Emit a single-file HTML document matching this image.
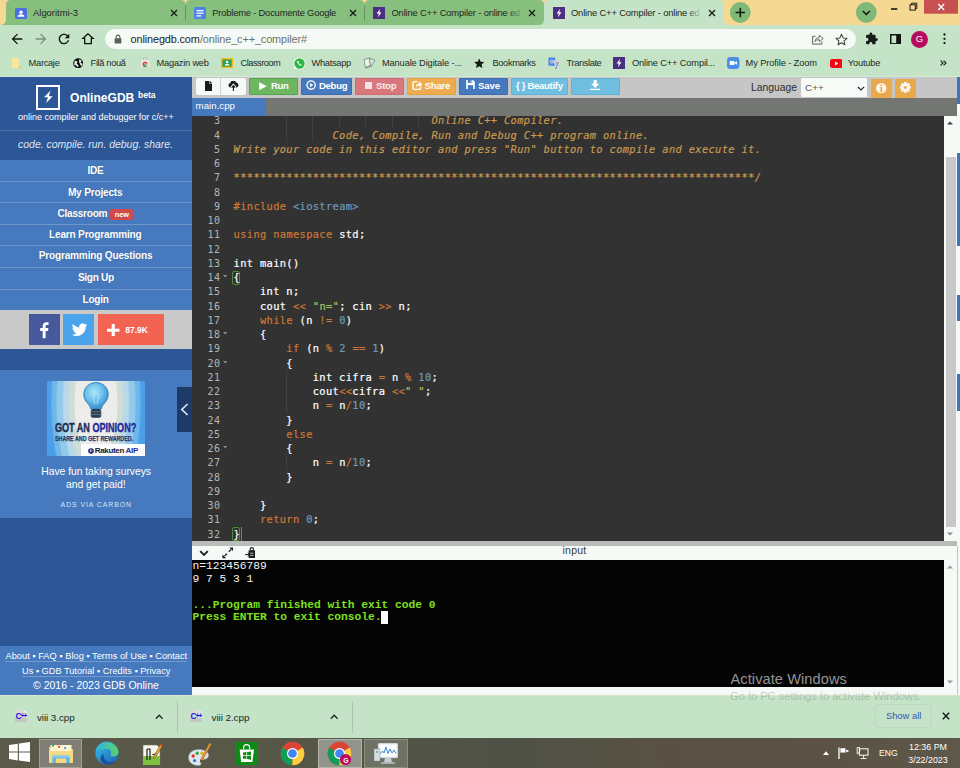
<!DOCTYPE html>
<html lang="en"><head><meta charset="utf-8"><title>Online C++ Compiler - online editor</title>
<style>
*{margin:0;padding:0;box-sizing:content-box}
html,body{width:960px;height:768px;overflow:hidden;background:#C4E3C7}
body{font-family:"Liberation Sans",sans-serif;position:relative;-webkit-font-smoothing:antialiased}
.b{position:absolute;display:block}
.t{position:absolute;display:block;line-height:1;white-space:pre}
ul{list-style:none}
.clip{overflow:hidden;white-space:nowrap}
.gutter{font-family:"DejaVu Sans Mono","Liberation Mono",monospace;font-size:10px;letter-spacing:0.58px;color:#b6b6b6;text-align:right}
.ln{height:14.25px;line-height:14.25px}
.code{font-family:"DejaVu Sans Mono","Liberation Mono",monospace;font-size:10.4px;letter-spacing:0.34px;color:#fff;white-space:pre;margin:0;-webkit-text-stroke:.2px}
.cl{height:14.25px;line-height:14.25px}
.k{color:#CC7833}.n{color:#6C99BB}.s{color:#A5C261}.c{color:#C6994F;font-style:italic}
.tl{white-space:pre}
</style></head>
<body>
<header class="b chrome" style='left:0px;top:0px;width:960px;height:77px;background:#C4E3C7;'>
<nav class="b tabstrip" style='left:0px;top:0px;width:960px;height:25px;background:#F5D891;'>
<svg class="b" style="left:0px;top:0px;" width="960" height="25" viewBox="0 0 960 25"><rect x="538" y="18" width="8" height="7" fill="#C4E3C7"/><rect x="180" y="5" width="190" height="20" fill="#86BF7E"/><path d="M0 25 Q6 25 6 19 V5 Q6 0 11 0 H180.500 Q185.500 0 185.500 5 V25z" fill="#86BF7E"/><path d="M185.500 25 V5 Q185.500 0 190.500 0 H359.500 Q364.500 0 364.500 5 V25z" fill="#86BF7E"/><path d="M364.500 25 V5 Q364.500 0 369.500 0 H539 Q544 0 544 5 V19 Q544 25 538 25z" fill="#86BF7E"/><path d="M544 25 V5 Q544 0 549 0 H719 Q724 0 724 5 V25z" fill="#C4E3C7"/><rect x="723.500" y="19" width="7" height="6" fill="#C4E3C7"/><path d="M724 19 H731 V25 H729.500 Q724 25 724 19z" fill="#F5D891"/><rect x="185" y="5" width="1" height="15.500" fill="#5f9a58"/><rect x="364" y="5" width="1" height="15.500" fill="#5f9a58"/><circle cx="740.300" cy="12.500" r="10.400" fill="#7FB978"/><path d="M735.600 12.500h9.400M740.300 7.800v9.400" stroke="#10160f" stroke-width="1.500"/><circle cx="866.300" cy="12.500" r="10.400" fill="#7FB978"/><path d="M862.800 11 l3.500 3.500 3.500-3.500" stroke="#10160f" stroke-width="1.400" fill="none"/><rect x="891" y="8.200" width="6.300" height="1.600" fill="#1b1b12"/><path d="M911.500 4.800v-1.600h5.300v5.300h-1.600" stroke="#1b1b12" stroke-width="1" fill="none"/><rect x="910" y="4.800" width="5.300" height="5.300" stroke="#1b1b12" stroke-width="1" fill="none"/><rect x="924" y="0" width="34" height="13.700" fill="#C75050"/><path d="M938.200 4 l6 6 M944.200 4 l-6 6" stroke="#fff" stroke-width="1.300"/></svg>
<svg class="b" style="left:15px;top:7.5px;" width="12" height="11" viewBox="0 0 12 11"><rect width="12" height="11" rx="1.500" fill="#4A6FE3"/><circle cx="6" cy="4.200" r="1.700" fill="#fff"/><path d="M2.600 8.800q0-2.600 3.400-2.600t3.400 2.600z" fill="#fff"/></svg>
<span class="t" style='left:33px;top:8.2px;font-size:9.4px;color:#1e2620;letter-spacing:0.02px;'>Algoritmi-3</span>
<svg class="b" style="left:170.3px;top:8.7px;" width="8" height="8" viewBox="0 0 8 8"><path d="M1 1 L7 7 M7 1 L1 7" stroke="#161a16" stroke-width="1.3" fill="none"/></svg>
<svg class="b" style="left:194px;top:6.8px;" width="12" height="12.4" viewBox="0 0 12 12.4"><rect width="12" height="12.400" rx="1.500" fill="#4C84E8"/><path d="M2.500 3.600h7M2.500 6.200h7M2.500 8.800h4.600" stroke="#fff" stroke-width="1.300"/></svg>
<span class="t" style='left:212.3px;top:8.2px;font-size:9.4px;color:#1e2620;letter-spacing:-0.2px;'>Probleme - Documente Google</span>
<svg class="b" style="left:349.2px;top:8.7px;" width="8" height="8" viewBox="0 0 8 8"><path d="M1 1 L7 7 M7 1 L1 7" stroke="#161a16" stroke-width="1.3" fill="none"/></svg>
<svg class="b" style="left:373.3px;top:6.8px;" width="12" height="12" viewBox="0 0 12 12"><rect width="12" height="12" fill="#4B2E83"/><path d="M7.1 1.8 3.6 6.6h2.2L4.9 10.2 8.5 5.3H6.2z" fill="#fff"/></svg>
<div class="b" style='left:391.5px;top:3px;width:131px;height:19px;overflow:hidden;'><span class="t" style='left:0px;top:5.2px;font-size:9.4px;color:#1e2620;letter-spacing:-0.17px;'>Online C++ Compiler - online ed</span></div>
<div class="b" style='left:508px;top:4px;width:15px;height:17px;background:linear-gradient(90deg,rgba(134,191,126,0),#86BF7E);'></div>
<svg class="b" style="left:528.2px;top:8.7px;" width="8" height="8" viewBox="0 0 8 8"><path d="M1 1 L7 7 M7 1 L1 7" stroke="#161a16" stroke-width="1.3" fill="none"/></svg>
<svg class="b" style="left:553px;top:6.8px;" width="12" height="12" viewBox="0 0 12 12"><rect width="12" height="12" fill="#4B2E83"/><path d="M7.1 1.8 3.6 6.6h2.2L4.9 10.2 8.5 5.3H6.2z" fill="#fff"/></svg>
<div class="b" style='left:571px;top:3px;width:131px;height:19px;overflow:hidden;'><span class="t" style='left:0px;top:5.2px;font-size:9.4px;color:#1e2620;letter-spacing:-0.17px;'>Online C++ Compiler - online ed</span></div>
<div class="b" style='left:687px;top:4px;width:15px;height:17px;background:linear-gradient(90deg,rgba(196,227,199,0),#C4E3C7);'></div>
<svg class="b" style="left:707.6px;top:8.7px;" width="8" height="8" viewBox="0 0 8 8"><path d="M1 1 L7 7 M7 1 L1 7" stroke="#161a16" stroke-width="1.3" fill="none"/></svg>
</nav>
<div class="b toolbar" style='left:0px;top:25px;width:960px;height:27px;'>
<svg class="b" style="left:8.5px;top:6px;" width="16" height="16" viewBox="0 0 24 24"><path d="M20 11H7.830l5.590-5.590L12 4l-8 8 8 8 1.410-1.410L7.830 13H20v-2z" fill="#121712"/></svg>
<svg class="b" style="left:32.5px;top:6px;" width="16" height="16" viewBox="0 0 24 24"><path d="M4 11h12.170l-5.590-5.590L12 4l8 8-8 8-1.410-1.410L16.170 13H4v-2z" fill="#7f8f80"/></svg>
<svg class="b" style="left:56.3px;top:6px;" width="16" height="16" viewBox="0 0 24 24"><path d="M17.650 6.350C16.200 4.900 14.210 4 12 4c-4.420 0-7.990 3.580-7.990 8s3.570 8 7.990 8c3.730 0 6.840-2.550 7.730-6h-2.080c-.820 2.330-3.040 4-5.650 4-3.310 0-6-2.690-6-6s2.690-6 6-6c1.660 0 3.140.690 4.220 1.780L13 11h7V4l-2.350 2.350z" fill="#121712"/></svg>
<svg class="b" style="left:80.4px;top:6px;" width="16" height="16" viewBox="0 0 24 24"><path d="M12 4.200 4.500 11H7v8h10v-8h2.500z" fill="none" stroke="#121712" stroke-width="2" stroke-linejoin="miter"/></svg>
<div class="b omnibox" style='left:105px;top:3.5px;width:750.5px;height:20.8px;background:#F6FAF6;border-radius:10.400px;'></div>
<svg class="b" style="left:114px;top:8.5px;" width="8" height="10" viewBox="0 0 8 10"><rect x="0.600" y="4.200" width="6.800" height="5.400" rx="0.800" fill="#5a5f5a"/><path d="M2.100 4.500V3a1.900 1.900 0 0 1 3.800 0v1.500" fill="none" stroke="#5a5f5a" stroke-width="1.100"/></svg>
<span class="t" style='left:130.6px;top:8.7px;font-size:10.9px;color:#1c211d;letter-spacing:-0.13px;'>onlinegdb.com</span>
<span class="t" style='left:199.9px;top:8.7px;font-size:10.9px;color:#6a716b;letter-spacing:-0.12px;'>/online_c++_compiler#</span>
<svg class="b" style="left:811px;top:8px;" width="13" height="12" viewBox="0 0 13 12"><path d="M4.500 3.300H1.600v7.800h9.300V8.600" fill="none" stroke="#5b615b" stroke-width="1"/><path d="M3.800 8.600Q4.300 4.600 8.300 4.500V2.300L12.300 5.500 8.300 8.700V6.600Q5.300 6.500 3.800 8.600z" fill="none" stroke="#5b615b" stroke-width="0.900" stroke-linejoin="round"/></svg>
<svg class="b" style="left:834.5px;top:7.5px;" width="13" height="13" viewBox="0 0 13 13"><path d="M6.500 1.300 8.100 4.900 12 5.300 9.100 7.900 9.900 11.800 6.500 9.800 3.100 11.800 3.900 7.900 1 5.300 4.900 4.900z" fill="none" stroke="#3d433e" stroke-width="1.050" stroke-linejoin="round"/></svg>
<svg class="b" style="left:864.5px;top:7.3px;" width="13.4" height="13.4" viewBox="0 0 24 24"><path d="M20.500 11H19V7c0-1.100-.900-2-2-2h-4V3.500C13 2.120 11.880 1 10.500 1S8 2.120 8 3.500V5H4c-1.100 0-1.990.900-1.990 2v3.800H3.500c1.490 0 2.700 1.210 2.700 2.700s-1.210 2.700-2.700 2.700H2V20c0 1.100.900 2 2 2h3.800v-1.500c0-1.490 1.210-2.700 2.700-2.700 1.490 0 2.700 1.210 2.700 2.700V22H17c1.100 0 2-.900 2-2v-4h1.500c1.380 0 2.500-1.120 2.500-2.500S21.880 11 20.500 11z" fill="#161c17"/></svg>
<svg class="b" style="left:889.8px;top:8.5px;" width="11.5" height="10.6" viewBox="0 0 11.5 10.6"><rect x="0.750" y="0.750" width="10" height="9.100" fill="none" stroke="#101410" stroke-width="1.500"/><rect x="6.200" y="0.750" width="4.600" height="9.100" fill="#101410"/></svg>
<div class="b avatar" style='left:911px;top:5.6px;width:17px;height:17px;background:#B80A5F;border-radius:50%;'></div>
<span class="t" style='left:919.6px;transform:translateX(-50%);top:9.4px;font-size:9.6px;color:#fff;'>G</span>
<svg class="b" style="left:942.5px;top:8.4px;" width="3" height="12" viewBox="0 0 3 12"><circle cx="1.500" cy="1.500" r="1.150" fill="#141814"/><circle cx="1.500" cy="5.800" r="1.150" fill="#141814"/><circle cx="1.500" cy="10.100" r="1.150" fill="#141814"/></svg>
</div>
<div class="b bookmarks" style='left:0px;top:52px;width:960px;height:25px;'>
<div class="b" style='left:0px;top:24px;width:960px;height:1px;background:#d3e9d5;'></div>
<svg class="b" style="left:12px;top:5.8px;" width="8.6" height="10.4" viewBox="0 0 8.6 10.4"><path d="M0 0h6.800v8.600H8.600v1.800H0z" fill="#FBE69A"/><path d="M6.800 8.600h1.800v1.800H6.800z" fill="#E9B93C"/></svg>
<span class="t" style='left:28.6px;top:6.9px;font-size:9.3px;color:#242b25;letter-spacing:-0.31px;'>Marcaje</span>
<svg class="b" style="left:73px;top:5.6px;" width="10.4" height="10.4" viewBox="0 0 10.4 10.4"><circle cx="5.200" cy="5.200" r="5" fill="#111"/><path d="M2 2.600 4.600 3.800 3.600 5.800 5.600 7.200 4.800 9.600 3.200 7.600 1 6.400zM6.400 1.200 8.800 2.800 7.400 4.400 9.800 6 8.400 8.200 7 6.200 6 3.400z" fill="#dfeee0"/></svg>
<span class="t" style='left:90.6px;top:6.9px;font-size:9.3px;color:#242b25;letter-spacing:-0.36px;'>Filă nouă</span>
<svg class="b" style="left:139.5px;top:5.4px;" width="10.4" height="11" viewBox="0 0 10.4 11"><path d="M1 2.800h8.400L10 10.400H.400z" fill="#f1f1f1" stroke="#c9c9c9" stroke-width=".5"/><path d="M3.300 3V1.900a1.900 1.900 0 0 1 3.800 0V3" fill="none" stroke="#bbb" stroke-width=".8"/><circle cx="5.200" cy="7.300" r="2.700" fill="#DB4437"/><path d="M5.200 7.300 2.900 8.700A2.700 2.700 0 0 0 6.600 9.600z" fill="#0F9D58"/><path d="M5.200 7.300 6.600 9.600A2.700 2.700 0 0 0 7.700 6.200z" fill="#FFCD40"/><circle cx="5.200" cy="7.300" r="1.100" fill="#4285F4" stroke="#fff" stroke-width=".4"/></svg>
<span class="t" style='left:156.5px;top:6.9px;font-size:9.3px;color:#242b25;letter-spacing:-0.23px;'>Magazin web</span>
<svg class="b" style="left:221px;top:6px;" width="12.2" height="10.2" viewBox="0 0 12.2 10.2"><rect width="12.200" height="10.200" rx="1" fill="#F5BA18"/><rect x="1.500" y="1.500" width="9.200" height="7.200" fill="#2E9E5B"/><circle cx="6.100" cy="4" r="1.300" fill="#fff"/><path d="M3.600 7.600q0-1.900 2.500-1.900t2.500 1.900z" fill="#fff"/></svg>
<span class="t" style='left:240.6px;top:6.9px;font-size:9.3px;color:#242b25;letter-spacing:-0.54px;'>Classroom</span>
<svg class="b" style="left:292.6px;top:4.6px;" width="13" height="13" viewBox="0 0 12 12"><circle cx="6" cy="6" r="5.600" fill="#fff"/><circle cx="6" cy="6" r="4.800" fill="#2CB742"/><path d="M.700 11.400 1.700 8.300 3.700 10.300z" fill="#fff"/><path d="M4.300 3.500c-.6.500-.6 1.500.4 2.800s2.100 2 3 1.800l.5-.8-1.100-.7-.5.400c-.5-.2-1.100-.8-1.400-1.400l.4-.5-.6-1.300z" fill="#fff"/></svg>
<span class="t" style='left:311.5px;top:6.9px;font-size:9.3px;color:#242b25;letter-spacing:-0.31px;'>Whatsapp</span>
<svg class="b" style="left:363px;top:5.4px;" width="13.4" height="11.4" viewBox="0 0 13.4 11.4"><path d="M1 2.600 6.400 1 7.600 8.400 2.400 10.600z" fill="#e9f3ea" stroke="#5e665f" stroke-width=".6"/><path d="M6.400 1 12 3.400 8.200 9.300 7.600 8.400z" fill="#dbe8dc" stroke="#5e665f" stroke-width=".6"/><path d="M2.400 10.600 7.600 8.400 8.200 9.300 3 11.200z" fill="#cfd9d0" stroke="#5e665f" stroke-width=".5"/></svg>
<span class="t" style='left:381.9px;top:6.9px;font-size:9.3px;color:#242b25;letter-spacing:-0.13px;'>Manuale Digitale -...</span>
<svg class="b" style="left:474.4px;top:5.6px;" width="10.4" height="10.4" viewBox="0 0 10.4 10.4"><path d="M5.200 .400 6.700 3.800 10.300 4.100 7.600 6.500 8.400 10.100 5.200 8.200 2 10.100 2.800 6.500 .100 4.100 3.700 3.800z" fill="#141a15"/></svg>
<span class="t" style='left:492.5px;top:6.9px;font-size:9.3px;color:#242b25;letter-spacing:-0.38px;'>Bookmarks</span>
<svg class="b" style="left:548px;top:5px;" width="12.4" height="12.4" viewBox="0 0 12.4 12.4"><path d="M.500 .400H7l1.500 8.400H.500z" fill="#4C86E8"/><path d="M5 3.600h6.900v7.600l-3.400.800z" fill="#d5dbe0"/><path d="M8.500 8.800 6.900 12.200 8.900 11z" fill="#3B68C9"/><circle cx="3.800" cy="4.600" r="1.400" fill="none" stroke="#fff" stroke-width=".8"/><path d="M7.600 5.600h3.400M9.300 5v.6M8 8.600q2-1.200 2.400-3M8.300 6.400q.8 1.600 2.400 2.200" stroke="#6b7680" stroke-width=".6" fill="none"/></svg>
<span class="t" style='left:566.5px;top:6.9px;font-size:9.3px;color:#242b25;letter-spacing:-0.39px;'>Translate</span>
<svg class="b" style="left:613.3px;top:5px;" width="12" height="12" viewBox="0 0 12 12"><rect width="12" height="12" fill="#4B2E83"/><path d="M7.1 1.8 3.6 6.6h2.2L4.9 10.2 8.5 5.3H6.2z" fill="#fff"/></svg>
<span class="t" style='left:631.9px;top:6.9px;font-size:9.3px;color:#242b25;letter-spacing:-0.16px;'>Online C++ Compil...</span>
<svg class="b" style="left:727.3px;top:5px;" width="12.4" height="12" viewBox="0 0 12.4 12"><rect width="12.400" height="12" rx="3.400" fill="#4A8CF0"/><rect x="2.600" y="4" width="5" height="4" rx=".8" fill="#fff"/><path d="M7.900 5.600 10 4.200v3.600L7.900 6.400z" fill="#fff"/><path d="M2.600 2.200h7.200" stroke="#4fc06a" stroke-width=".8" stroke-dasharray="1 1"/></svg>
<span class="t" style='left:745.6px;top:6.9px;font-size:9.3px;color:#242b25;letter-spacing:-0.12px;'>My Profile - Zoom</span>
<svg class="b" style="left:829.5px;top:6.6px;" width="12.6" height="9" viewBox="0 0 12.6 9"><rect width="12.600" height="9" rx="2.300" fill="#F40612"/><path d="M5 2.500 8.300 4.500 5 6.500z" fill="#fff"/></svg>
<span class="t" style='left:847.8px;top:6.9px;font-size:9.3px;color:#242b25;letter-spacing:-0.19px;'>Youtube</span>
<svg class="b" style="left:939.5px;top:8px;" width="7" height="6" viewBox="0 0 7 6"><path d="M.600 .600 3 3 .600 5.400M3.600 .600 6 3 3.600 5.400" stroke="#1a201b" stroke-width="1.100" fill="none"/></svg>
</div>
</header>
<div class="b page" style='left:0px;top:77px;width:960px;height:618px;background:#F6FAF6;'>
<aside class="b sidebar" style='left:0px;top:0px;width:192px;height:618px;background:#2C5696;'>
<div class="b logo" style='left:35.9px;top:8px;width:24.2px;height:24.9px;border:solid #fff;border-width:2.900px 2.300px;box-sizing:border-box;'></div>
<svg class="b" style="left:43px;top:13px;" width="11" height="14" viewBox="0 0 11 14"><path d="M7.400 .800 1 7.300H4.900L3.200 13 9.700 6.200H5.900z" fill="#fff"/></svg>
<span class="t" style='left:70px;top:15.1px;font-size:12.07px;color:#fff;font-weight:bold;'>OnlineGDB</span>
<span class="t" style='left:138px;top:13.5px;font-size:8.55px;color:#fff;font-weight:bold;'>beta</span>
<span class="t" style='left:18px;top:36.2px;font-size:8.99px;color:#fff;'>online compiler and debugger for c/c++</span>
<div class="b" style='left:0px;top:52.7px;width:192px;height:0.9px;background:#4a6fa6;'></div>
<span class="t" style='left:18.1px;top:63.2px;font-size:10.45px;color:#dfe6f2;font-style:italic;'>code. compile. run. debug. share.</span>
<nav class="b menu" style='left:0px;top:83.4px;width:192px;height:149.4px;background:#4679BD;'>
<div class="b" style='left:0px;top:20.7px;width:192px;height:0.9px;background:#6E94C9;'></div>
<div class="b" style='left:0px;top:42px;width:192px;height:0.9px;background:#6E94C9;'></div>
<div class="b" style='left:0px;top:63.6px;width:192px;height:0.9px;background:#6E94C9;'></div>
<div class="b" style='left:0px;top:84.5px;width:192px;height:0.9px;background:#6E94C9;'></div>
<div class="b" style='left:0px;top:106.35px;width:192px;height:0.9px;background:#6E94C9;'></div>
<div class="b" style='left:0px;top:128.6px;width:192px;height:0.9px;background:#6E94C9;'></div>
<span class="t" style='left:87.5px;top:5.5px;font-size:10.1px;color:#fff;font-weight:bold;letter-spacing:-0.28px;text-shadow:0 0 1px rgba(0,0,0,.25);'>IDE</span>
<span class="t" style='left:67.9px;top:27.35px;font-size:10.1px;color:#fff;font-weight:bold;letter-spacing:-0.19px;text-shadow:0 0 1px rgba(0,0,0,.25);'>My Projects</span>
<span class="t" style='left:57.5px;top:48.2px;font-size:10.1px;color:#fff;font-weight:bold;letter-spacing:-0.27px;text-shadow:0 0 1px rgba(0,0,0,.25);'>Classroom</span>
<span class="t" style='left:49.1px;top:70.1px;font-size:10.1px;color:#fff;font-weight:bold;letter-spacing:-0.21px;text-shadow:0 0 1px rgba(0,0,0,.25);'>Learn Programming</span>
<span class="t" style='left:38.75px;top:90.7px;font-size:10.1px;color:#fff;font-weight:bold;letter-spacing:-0.2px;text-shadow:0 0 1px rgba(0,0,0,.25);'>Programming Questions</span>
<span class="t" style='left:77.9px;top:112.6px;font-size:10.1px;color:#fff;font-weight:bold;letter-spacing:-0.32px;text-shadow:0 0 1px rgba(0,0,0,.25);'>Sign Up</span>
<span class="t" style='left:82.5px;top:134.5px;font-size:10.1px;color:#fff;font-weight:bold;letter-spacing:-0.29px;text-shadow:0 0 1px rgba(0,0,0,.25);'>Login</span>
<div class="b badge" style='left:110.2px;top:48.2px;width:23.3px;height:11.8px;background:#D04A4C;border-radius:2px;'></div>
<span class="t" style='left:121.9px;transform:translateX(-50%);top:50.8px;font-size:7.4px;color:#fff;font-weight:bold;'>new</span>
</nav>
<div class="b social" style='left:0px;top:232.8px;width:192px;height:39.6px;background:#C9C9C9;'>
<div class="b" style='left:28.7px;top:4.4px;width:31.4px;height:31.3px;background:#47599D;'></div>
<svg class="b" style="left:38px;top:11.2px;" width="12" height="18" viewBox="0 0 12 18"><path d="M7.600 17.300V10h2.400l.4-2.900H7.600V5.300c0-.8.200-1.400 1.400-1.400h1.500V1.300C10.200 1.300 9.400 1.200 8.400 1.200 6.200 1.200 4.700 2.500 4.700 5v2.100H2.200V10h2.500v7.300z" fill="#fff"/></svg>
<div class="b" style='left:63px;top:4.4px;width:31.4px;height:31.3px;background:#4BA3EA;'></div>
<svg class="b" style="left:70.5px;top:13.2px;" width="17" height="14" viewBox="0 0 17 14"><path d="M16.300 1.900c-.6.300-1.200.4-1.800.5.700-.4 1.100-1 1.400-1.700-.6.400-1.300.6-2 .8A3.200 3.200 0 0 0 8.400 4.400C5.700 4.300 3.400 3 1.800 1.100c-.8 1.400-.4 3.300 1 4.200-.5 0-1-.2-1.400-.4 0 1.500 1.100 2.900 2.600 3.200-.5.100-1 .1-1.400 0 .4 1.300 1.600 2.200 3 2.200A6.400 6.400 0 0 1 .800 11.700 9 9 0 0 0 5.700 13.100c5.900 0 9.200-5 9-9.400.6-.5 1.200-1.100 1.600-1.800z" fill="#fff"/></svg>
<div class="b" style='left:97.7px;top:4.4px;width:66px;height:31.3px;background:#F26351;'></div>
<svg class="b" style="left:107px;top:14.2px;" width="12.5" height="12.5" viewBox="0 0 12.5 12.5"><path d="M4.700 0h3.100v4.700h4.700v3.100H7.800v4.700H4.700V7.800H0V4.700h4.700z" fill="#fff"/></svg>
<span class="t" style='left:125.3px;top:16.4px;font-size:8.51px;color:#fff;font-weight:bold;'>87.9K</span>
</div>
<div class="b carbon" style='left:0px;top:293px;width:192px;height:148px;background:#4679BD;'>
<div class="b ad-img" style='left:47px;top:11px;width:98px;height:75px;background:radial-gradient(ellipse 53px 140px at 49px 22px,#ECECEA 0,#ECECEA 39%,#D0DDD5 42%,#D0DDD5 50%,#B8D9EC 53%,#B8D9EC 61%,#93C9EB 64%,#93C9EB 73%,#70B7EA 76%,#70B7EA 82%,#4A9FE8 86%);'></div>
<svg class="b" style="left:83.2px;top:12.4px;" width="26" height="37" viewBox="0 0 26 37"><defs><radialGradient id="blb" cx="0.42" cy="0.36" r="0.7"><stop offset="0" stop-color="#a9e6f8"/><stop offset=".55" stop-color="#63bdea"/><stop offset="1" stop-color="#2f86c6"/></radialGradient></defs><path d="M13 .600C6 .600 .800 5.800 .800 12.400c0 4.200 2.400 7.400 4.600 9.800 1.400 1.600 2 3 2.200 4.600h10.800c.2-1.600.8-3 2.200-4.600 2.200-2.400 4.600-5.600 4.600-9.800C25.200 5.800 20 .600 13 .600z" fill="url(#blb)" stroke="#2a78b4" stroke-width=".9"/><path d="M9.600 12.500 12 22M16.400 12.500 14 22M9.600 12.500q1.700-1.600 3.400 0 1.700-1.600 3.400 0" stroke="#c8eefa" stroke-width=".6" fill="none"/><rect x="7.800" y="27" width="10.400" height="8.800" rx="2" fill="#2a3d50"/><path d="M7.800 29.800h10.400M7.800 32.600h10.400" stroke="#6f8699" stroke-width=".8"/></svg>
<div class="b" style='left:81px;top:74px;width:64px;height:12px;background:#FBFCFB;'></div>
<span class="t" style='left:55.4px;top:52.2px;font-size:12.2px;color:#1d2c55;font-weight:bold;-webkit-text-stroke:.4px;transform:scaleX(0.7437);transform-origin:0 50%;'>GOT AN <span style="color:#23299a">OPINION?</span></span>
<span class="t" style='left:54.8px;top:65px;font-size:7px;color:#1f3a6e;font-weight:bold;-webkit-text-stroke:.25px;transform:scaleX(0.7625);transform-origin:0 50%;'>SHARE AND GET REWARDED.</span>
<svg class="b" style="left:88px;top:77.6px;" width="6" height="6" viewBox="0 0 6 6"><circle cx="3" cy="3" r="2.800" fill="#1b1b6e"/><path d="M2.200 1.600v2.800M2.200 1.800h1.100q.9 0 .9.800t-.9.800H2.200" stroke="#fff" stroke-width=".6" fill="none"/></svg>
<span class="t" style='left:94.75px;top:77.3px;font-size:8px;color:#15152e;font-weight:bold;letter-spacing:-0.33px;'>Rakuten <span style="color:#2a2aa0">AIP</span></span>
<span class="t" style='left:41.25px;top:96.7px;font-size:10.4px;color:#fff;letter-spacing:-0.05px;'>Have fun taking surveys</span>
<span class="t" style='left:66px;top:109.9px;font-size:10.4px;color:#fff;letter-spacing:-0.03px;'>and get paid!</span>
<span class="t" style='left:60.6px;top:131.8px;font-size:6.9px;color:#dbe5f3;letter-spacing:0.94px;'>ADS VIA CARBON</span>
</div>
<div class="b collapse" style='left:177px;top:310px;width:15px;height:44.8px;background:#1E3A68;'></div>
<svg class="b" style="left:179.5px;top:325.5px;" width="9" height="13" viewBox="0 0 9 13"><path d="M7.600 1 1.800 6.500 7.600 12" stroke="#dfe7f3" stroke-width="1.700" fill="none"/></svg>
<footer class="b foot" style='left:0px;top:569px;width:192px;height:49px;background:#4679BD;'>
<span class="t" style='left:5.5px;top:6.2px;font-size:9.29px;color:#fff;text-decoration:underline;text-decoration-color:rgba(255,255,255,.25);text-underline-offset:2px;text-decoration-thickness:.6px;white-space:nowrap;'>About ▪ FAQ ▪ Blog ▪ Terms of Use ▪ Contact</span>
<span class="t" style='left:22px;top:21px;font-size:9.21px;color:#fff;text-decoration:underline;text-decoration-color:rgba(255,255,255,.25);text-underline-offset:2px;text-decoration-thickness:.6px;white-space:nowrap;'>Us ▪ GDB Tutorial ▪ Credits ▪ Privacy</span>
<span class="t" style='left:33px;top:34.2px;font-size:10.52px;color:#fff;'>© 2016 - 2023 GDB Online</span>
</footer>
</aside>
<div class="b ide-toolbar" style='left:192px;top:0px;width:765px;height:20.6px;background:#C6C6C6;'>
<div class="b btn" style='left:4px;top:1.2px;width:49.5px;height:17px;background:#F6FAF6;border-radius:2px;'></div>
<div class="b" style='left:28.3px;top:1.2px;width:0.8px;height:17px;background:#cfd2cf;'></div>
<svg class="b" style="left:12.6px;top:3.6px;" width="7.6" height="10" viewBox="0 0 7.6 10"><path d="M0 0h4.400v3.100h3.200V10H0z" fill="#1c1c1c"/><path d="M5 0 7.600 2.600H5z" fill="#1c1c1c"/></svg>
<svg class="b" style="left:36px;top:3.6px;" width="11" height="10.6" viewBox="0 0 11 10.6"><path d="M2.600 6.500A2.250 2.250 0 0 1 2.300 2.050 3.100 3.100 0 0 1 8.250 1.600 2.500 2.500 0 0 1 8.600 6.500z" fill="#1c1c1c"/><path d="M5.400 10.200V5.600M3.300 6.900 5.400 4.300 7.500 6.900" stroke="#F6FAF6" stroke-width="2.500" fill="none"/><path d="M5.400 10.200V5.200M3.700 6.700 5.400 4.600 7.100 6.700" stroke="#1c1c1c" stroke-width="1.100" fill="none"/></svg>
<div class="b btn" style='left:57px;top:1.2px;width:49px;height:17px;background:#6EB662;border:.8px solid #4FA84A;box-sizing:border-box;border-radius:1px;'></div>
<svg class="b" style="left:67.2px;top:4.6px;" width="8" height="8.4" viewBox="0 0 8 8.4"><path d="M.200 .200 7.700 4.200.200 8.200z" fill="#fff"/></svg>
<span class="t" style='left:79px;top:4px;font-size:9.6px;color:#fff;font-weight:bold;letter-spacing:-0.39px;'>Run</span>
<div class="b btn" style='left:109px;top:1.2px;width:51px;height:17px;background:#4679BD;border:.8px solid #3d6cae;box-sizing:border-box;border-radius:1px;'></div>
<svg class="b" style="left:113.8px;top:3px;" width="10.2" height="10.2" viewBox="0 0 10 10"><circle cx="5" cy="5" r="4.100" fill="none" stroke="#fff" stroke-width="1.300"/><path d="M3.900 2.900 7.200 5 3.900 7.100z" fill="#fff"/></svg>
<span class="t" style='left:127px;top:4px;font-size:9.6px;color:#fff;font-weight:bold;letter-spacing:-0.32px;'>Debug</span>
<div class="b btn" style='left:163px;top:1.2px;width:49px;height:17px;background:#D8787C;border:.8px solid #cf6d70;box-sizing:border-box;border-radius:1px;'></div>
<div class="b" style='left:172.8px;top:5px;width:7.7px;height:7px;background:#F3E4E4;'></div>
<span class="t" style='left:184px;top:4px;font-size:9.6px;color:#F7ECEC;font-weight:bold;letter-spacing:-0.27px;'>Stop</span>
<div class="b btn" style='left:214.6px;top:1.2px;width:49.4px;height:17px;background:#EDAC50;border:.8px solid #e5a040;box-sizing:border-box;border-radius:1px;'></div>
<svg class="b" style="left:219.6px;top:3.2px;" width="10.4" height="10.4" viewBox="0 0 10.4 10.4"><path d="M5.600 1.600H2.400q-1.400 0-1.400 1.400v5q0 1.400 1.400 1.400h5q1.400 0 1.400-1.400V7.200" fill="none" stroke="#fff" stroke-width="1.400"/><path d="M4 7.200Q4 3.600 7.400 3.500V1.600L10.400 4.500 7.400 7.400V5.500Q5.200 5.400 4 7.200z" fill="#fff"/></svg>
<span class="t" style='left:232.6px;top:4px;font-size:9.6px;color:#fff;font-weight:bold;letter-spacing:-0.21px;'>Share</span>
<div class="b btn" style='left:267px;top:1.2px;width:49px;height:17px;background:#4679BD;border:.8px solid #3d6cae;box-sizing:border-box;border-radius:1px;'></div>
<svg class="b" style="left:274px;top:3px;" width="9" height="9.2" viewBox="0 0 9 9.6"><path d="M0 0h7.200L9 1.800V9.600H0z" fill="#fff"/><rect x="1.700" y="0" width="4.600" height="3" fill="#4679BD"/><rect x="4.600" y=".500" width="1.100" height="2" fill="#fff"/><rect x="1.700" y="5.400" width="5.600" height="4.200" fill="#4679BD"/></svg>
<span class="t" style='left:286.1px;top:4px;font-size:9.6px;color:#fff;font-weight:bold;letter-spacing:-0.13px;'>Save</span>
<div class="b btn" style='left:319px;top:1.2px;width:57px;height:17px;background:#70BEE0;border:.8px solid #5db3d8;box-sizing:border-box;border-radius:1px;'></div>
<span class="t" style='left:324px;top:4px;font-size:9.6px;color:#fff;font-weight:bold;letter-spacing:-0.33px;'>{ } Beautify</span>
<div class="b btn" style='left:379px;top:1.2px;width:48.5px;height:17px;background:#70BEE0;border:.8px solid #5db3d8;box-sizing:border-box;border-radius:1px;'></div>
<svg class="b" style="left:398px;top:2.8px;" width="10.4" height="10.4" viewBox="0 0 10.4 10.4"><path d="M3.600 0h3.200v3.800h2.500L5.200 8 1.100 3.800h2.500z" fill="#fff"/><rect x="0" y="8.800" width="10.400" height="1.800" fill="#fff"/></svg>
<span class="t" style='left:559px;top:6.2px;font-size:10.34px;color:#2d2d2d;'>Language</span>
<div class="b select" style='left:609px;top:1px;width:66px;height:19.2px;background:#F7FBF7;border-radius:1.500px;'></div>
<span class="t" style='left:613px;top:6.2px;font-size:9.93px;color:#5a5a5a;'>C++</span>
<svg class="b" style="left:664.6px;top:9px;" width="8" height="5.4" viewBox="0 0 8 5.4"><path d="M.800 .800 4 4 7.200 .800" stroke="#222" stroke-width="1.200" fill="none"/></svg>
<div class="b btn" style='left:679px;top:2.3px;width:21px;height:18.3px;background:#E9AA4C;'></div>
<svg class="b" style="left:684.4px;top:5.6px;" width="10.4" height="10.4" viewBox="0 0 10.4 10.4"><circle cx="5.200" cy="5.200" r="5.200" fill="#fdf6ea"/><rect x="4.400" y="1.600" width="1.700" height="1.700" fill="#E9AA4C"/><path d="M3.800 4.300h2.300v3.500h.8v1H3.800v-1h.8V5.300h-.8z" fill="#E9AA4C"/></svg>
<div class="b btn" style='left:703px;top:2.3px;width:21px;height:18.3px;background:#E9AA4C;'></div>
<svg class="b" style="left:708.1px;top:5.4px;" width="10.8" height="10.8" viewBox="0 0 10.8 10.8"><rect x="4.050" y="0" width="2.700" height="3" fill="#fdf6ea" transform="rotate(0 5.400 5.400)"/><rect x="4.050" y="0" width="2.700" height="3" fill="#fdf6ea" transform="rotate(45 5.400 5.400)"/><rect x="4.050" y="0" width="2.700" height="3" fill="#fdf6ea" transform="rotate(90 5.400 5.400)"/><rect x="4.050" y="0" width="2.700" height="3" fill="#fdf6ea" transform="rotate(135 5.400 5.400)"/><rect x="4.050" y="0" width="2.700" height="3" fill="#fdf6ea" transform="rotate(180 5.400 5.400)"/><rect x="4.050" y="0" width="2.700" height="3" fill="#fdf6ea" transform="rotate(225 5.400 5.400)"/><rect x="4.050" y="0" width="2.700" height="3" fill="#fdf6ea" transform="rotate(270 5.400 5.400)"/><rect x="4.050" y="0" width="2.700" height="3" fill="#fdf6ea" transform="rotate(315 5.400 5.400)"/><circle cx="5.400" cy="5.400" r="3.900" fill="#fdf6ea"/><circle cx="5.400" cy="5.400" r="1.500" fill="#E9AA4C"/></svg>
</div>
<div class="b file-tabs" style='left:192px;top:20.6px;width:765px;height:18.4px;background:#747673;'>
<div class="b file-tab" style='left:0px;top:0px;width:74px;height:18.4px;background:#4679BD;'></div>
<span class="t" style='left:3.6px;top:3.9px;font-size:9.71px;color:#fff;'>main.cpp</span>
</div>
<main class="b editor" style='left:192px;top:39px;width:765px;height:424.6px;background:#323232;overflow:hidden;'>
<div class="b" style='left:94px;top:-2.65px;width:0.8px;height:14.25px;background:#414141;'></div><div class="b" style='left:120.4px;top:-2.65px;width:0.8px;height:14.25px;background:#414141;'></div><div class="b" style='left:146.8px;top:-2.65px;width:0.8px;height:14.25px;background:#414141;'></div><div class="b" style='left:173.2px;top:-2.65px;width:0.8px;height:14.25px;background:#414141;'></div><div class="b" style='left:199.6px;top:-2.65px;width:0.8px;height:14.25px;background:#414141;'></div><div class="b" style='left:226px;top:-2.65px;width:0.8px;height:14.25px;background:#414141;'></div><div class="b" style='left:94px;top:11.6px;width:0.8px;height:14.25px;background:#414141;'></div><div class="b" style='left:120.4px;top:11.6px;width:0.8px;height:14.25px;background:#414141;'></div><div class="b" style='left:94px;top:253.85px;width:0.8px;height:14.25px;background:#414141;'></div><div class="b" style='left:94px;top:268.1px;width:0.8px;height:14.25px;background:#414141;'></div><div class="b" style='left:94px;top:282.35px;width:0.8px;height:14.25px;background:#414141;'></div><div class="b" style='left:94px;top:339.35px;width:0.8px;height:14.25px;background:#414141;'></div>
<div class="b" style='left:40.4px;top:411.2px;width:8px;height:14.05px;border:1px solid #4E8A3A;box-sizing:border-box;border-radius:2px;'></div>
<div class="b" style='left:40.4px;top:154.7px;width:8px;height:14.05px;border:1px solid #4E8A3A;box-sizing:border-box;border-radius:2px;'></div>
<div class="b cursor" style='left:48.6px;top:411.4px;width:0.9px;height:13.65px;background:#5f9a2a;'></div>
<div class="b gutter" style="left:0;top:-1.65px;width:28.600px;"><div class="ln">3</div><div class="ln">4</div><div class="ln">5</div><div class="ln">6</div><div class="ln">7</div><div class="ln">8</div><div class="ln">9</div><div class="ln">10</div><div class="ln">11</div><div class="ln">12</div><div class="ln">13</div><div class="ln">14</div><div class="ln">15</div><div class="ln">16</div><div class="ln">17</div><div class="ln">18</div><div class="ln">19</div><div class="ln">20</div><div class="ln">21</div><div class="ln">22</div><div class="ln">23</div><div class="ln">24</div><div class="ln">25</div><div class="ln">26</div><div class="ln">27</div><div class="ln">28</div><div class="ln">29</div><div class="ln">30</div><div class="ln">31</div><div class="ln">32</div></div>
<svg class="b" style="left:31.4px;top:159.3px;" width="4.4" height="3" viewBox="0 0 4.4 3"><path d="M0 0h4.400L2.200 2.600z" fill="#8a8a8a"/></svg>
<svg class="b" style="left:31.4px;top:216.3px;" width="4.4" height="3" viewBox="0 0 4.4 3"><path d="M0 0h4.400L2.200 2.600z" fill="#8a8a8a"/></svg>
<svg class="b" style="left:31.4px;top:244.8px;" width="4.4" height="3" viewBox="0 0 4.4 3"><path d="M0 0h4.400L2.200 2.600z" fill="#8a8a8a"/></svg>
<svg class="b" style="left:31.4px;top:330.3px;" width="4.4" height="3" viewBox="0 0 4.4 3"><path d="M0 0h4.400L2.200 2.600z" fill="#8a8a8a"/></svg>
<pre class="b code" style="left:41.6px;top:-2.65px;"><div class="cl"><span class="c">                              Online C++ Compiler.</span></div><div class="cl"><span class="c">               Code, Compile, Run and Debug C++ program online.</span></div><div class="cl"><span class="c">Write your code in this editor and press "Run" button to compile and execute it.</span></div><div class="cl"> </div><div class="cl"><span class="c">*******************************************************************************/</span></div><div class="cl"> </div><div class="cl"><span class="k">#include</span> <span class="n">&lt;iostream&gt;</span></div><div class="cl"> </div><div class="cl"><span class="k">using</span> <span class="k">namespace</span> std;</div><div class="cl"> </div><div class="cl">int main()</div><div class="cl">{</div><div class="cl">    int n;</div><div class="cl">    cout <span class="k">&lt;&lt;</span> <span class="s">"n="</span>; cin <span class="k">&gt;&gt;</span> n;</div><div class="cl">    <span class="k">while</span> (n <span class="k">!=</span> <span class="n">0</span>)</div><div class="cl">    {</div><div class="cl">        <span class="k">if</span> (n <span class="k">%</span> <span class="n">2</span> <span class="k">==</span> <span class="n">1</span>)</div><div class="cl">        {</div><div class="cl">            int cifra <span class="k">=</span> n <span class="k">%</span> <span class="n">10</span>;</div><div class="cl">            cout<span class="k">&lt;&lt;</span>cifra <span class="k">&lt;&lt;</span><span class="s">" "</span>;</div><div class="cl">            n <span class="k">=</span> n<span class="k">/</span><span class="n">10</span>;</div><div class="cl">        }</div><div class="cl">        <span class="k">else</span></div><div class="cl">        {</div><div class="cl">            n <span class="k">=</span> n<span class="k">/</span><span class="n">10</span>;</div><div class="cl">        }</div><div class="cl"> </div><div class="cl">    }</div><div class="cl">    <span class="k">return</span> <span class="n">0</span>;</div><div class="cl">}</div></pre>
<div class="b vscroll" style='left:751.6px;top:0px;width:13.4px;height:424.6px;background:#F6FAF6;'></div>
<svg class="b" style="left:755.4px;top:5.4px;" width="6" height="4" viewBox="0 0 6 4"><path d="M0 3.600 3 .400 6 3.600z" fill="#3c3c3c"/></svg>
<div class="b thumb" style='left:754.2px;top:41px;width:9.4px;height:370.4px;background:#C8C8C8;'></div>
<svg class="b" style="left:755.4px;top:415.6px;" width="6" height="4" viewBox="0 0 6 4"><path d="M0 .400h6L3 3.600z" fill="#8d8d8d"/></svg>
</main>
<section class="b console-wrap" style='left:192px;top:463.6px;width:765px;height:154.4px;background:#F6FAF6;'>
<div class="b splitter" style='left:0px;top:0px;width:765px;height:5.4px;background:#B9BDB9;'></div>
<svg class="b" style="left:7px;top:9px;" width="10" height="7" viewBox="0 0 10 7"><path d="M1.200 1.200 5 5 8.800 1.200" stroke="#1d1d1d" stroke-width="1.900" fill="none"/></svg>
<svg class="b" style="left:29.6px;top:6.4px;" width="11.6" height="11.6" viewBox="0 0 11.6 11.6"><path d="M2.600 9 5 6.600M6.800 4.800 9.200 2.400" stroke="#1d1d1d" stroke-width="1.300"/><path d="M.400 11.200V7.400L4.200 11.200zM11.200 .400v3.800L7.400 .400z" fill="#1d1d1d"/></svg>
<svg class="b" style="left:52.6px;top:6.8px;" width="10.4" height="11.4" viewBox="0 0 10.4 11.4"><path d="M3.600 3.400h6.400v7.600H3.600z" fill="#1d1d1d"/><circle cx="6.800" cy="2.300" r="1.700" fill="none" stroke="#1d1d1d" stroke-width="1.100"/><path d="M0 7.600h4.600M3 5.800 4.800 7.600 3 9.400" stroke="#1d1d1d" stroke-width="1" fill="none"/><path d="M5.200 6.200h3.200M5.200 8.400h3.200" stroke="#F6FAF6" stroke-width=".7"/></svg>
<span class="t" style='left:370.5px;top:4.2px;font-size:10.5px;color:#3b3b3b;letter-spacing:0.24px;'>input</span>
<div class="b terminal" style='left:0px;top:19.4px;width:751.7px;height:127.5px;background:#040405;'>
<span class="t tl" style='left:0.4px;top:1.4px;font-size:11.25px;color:#f4f4f4;font-family:"Liberation Mono", "DejaVu Sans Mono", monospace;'>n=123456789</span>
<span class="t tl" style='left:0.4px;top:14.15px;font-size:11.25px;color:#f4f4f4;font-family:"Liberation Mono", "DejaVu Sans Mono", monospace;'>9 7 5 3 1</span>
<span class="t tl" style='left:0.4px;top:39.65px;font-size:11.25px;color:#7FE01E;font-weight:bold;font-family:"Liberation Mono", "DejaVu Sans Mono", monospace;'>...Program finished with exit code 0</span>
<span class="t tl" style='left:0.4px;top:52.4px;font-size:11.25px;color:#7FE01E;font-weight:bold;font-family:"Liberation Mono", "DejaVu Sans Mono", monospace;'>Press ENTER to exit console.</span>
<div class="b tcursor" style='left:189.2px;top:51.2px;width:6.9px;height:12.7px;background:#fdfdfd;'></div>
<span class="t" style='left:538.5px;top:112.2px;font-size:14.6px;color:#959595;letter-spacing:0.08px;'>Activate Windows</span>
</div>
<svg class="b" style="left:755.4px;top:24.8px;" width="6" height="4" viewBox="0 0 6 4"><path d="M0 3.600 3 .400 6 3.600z" fill="#9a9a9a"/></svg>
<svg class="b" style="left:755.4px;top:139px;" width="6" height="4" viewBox="0 0 6 4"><path d="M0 .400h6L3 3.600z" fill="#9a9a9a"/></svg>
</section>
<div class="b edge" style='left:957.2px;top:0px;width:2.8px;height:618px;background:#F6FAF6;'>
<div class="b" style='left:0px;top:0px;width:2.8px;height:27px;background:#3F73BA;'></div>
<div class="b" style='left:0px;top:76px;width:2.8px;height:92.6px;background:#3F73BA;'></div>
<div class="b" style='left:0px;top:217.6px;width:2.8px;height:26.4px;background:#3F73BA;'></div>
<div class="b" style='left:0px;top:296.8px;width:2.8px;height:37.2px;background:#3F73BA;'></div>
<div class="b" style='left:0px;top:469px;width:0.9px;height:149px;background:#c3c7c3;'></div>
</div>
</div>
<div class="b downloads" style='left:0px;top:695px;width:960px;height:43px;background:#C4E3C7;'>
<div class="b" style='left:0px;top:0px;width:960px;height:0.8px;background:#d9e6c9;'></div>
<svg class="b" style="left:15px;top:15px;" width="12" height="12" viewBox="0 0 12 12"><path d="M0 0h9.400L12 2.600V12H0z" fill="#d9dbd9"/><path d="M9.400 0 12 2.600H9.400z" fill="#f4f4f4"/><path d="M0 8h12v4H0z" fill="#c3c6c3"/></svg>
<span class="t" style='left:15.6px;top:16.6px;font-size:8.6px;color:#1f12d8;font-weight:bold;letter-spacing:-.5px;'>C</span>
<span class="t" style='left:20.8px;top:17.7px;font-size:6.4px;color:#1f12d8;font-weight:bold;letter-spacing:-1px;'>++</span>
<span class="t" style='left:36.9px;top:17.8px;font-size:9.9px;color:#20261f;letter-spacing:-0.07px;'>viii 3.cpp</span>
<svg class="b" style="left:154.6px;top:18.8px;" width="8.4" height="5.6" viewBox="0 0 8.4 5.6"><path d="M.800 4.800 4.200 1.300 7.600 4.800" stroke="#20261f" stroke-width="1.300" fill="none"/></svg>
<div class="b" style='left:177.3px;top:5.5px;width:0.9px;height:32px;background:#a9c6ad;'></div>
<svg class="b" style="left:190px;top:15px;" width="12" height="12" viewBox="0 0 12 12"><path d="M0 0h9.400L12 2.600V12H0z" fill="#d9dbd9"/><path d="M9.400 0 12 2.600H9.400z" fill="#f4f4f4"/><path d="M0 8h12v4H0z" fill="#c3c6c3"/></svg>
<span class="t" style='left:190.6px;top:16.6px;font-size:8.6px;color:#1f12d8;font-weight:bold;letter-spacing:-.5px;'>C</span>
<span class="t" style='left:195.8px;top:17.7px;font-size:6.4px;color:#1f12d8;font-weight:bold;letter-spacing:-1px;'>++</span>
<span class="t" style='left:211.6px;top:17.8px;font-size:9.9px;color:#20261f;letter-spacing:-0.07px;'>viii 2.cpp</span>
<svg class="b" style="left:329.8px;top:18.8px;" width="8.4" height="5.6" viewBox="0 0 8.4 5.6"><path d="M.800 4.800 4.200 1.300 7.600 4.800" stroke="#20261f" stroke-width="1.300" fill="none"/></svg>
<div class="b" style='left:352.4px;top:5.5px;width:0.9px;height:32px;background:#a9c6ad;'></div>
<span class="t" style='left:730px;top:-4.4px;font-size:11.3px;color:rgba(120,130,122,.38);letter-spacing:-0.1px;'>Go to PC settings to activate Windows.</span>
<div class="b showall" style='left:874.8px;top:9.4px;width:57.7px;height:23.2px;border:.8px solid #bcd8bf;border-radius:3px;box-sizing:border-box;'></div>
<span class="t" style='left:903.6px;transform:translateX(-50%);top:16px;font-size:9.4px;color:#3558B8;white-space:nowrap;'>Show all</span>
<svg class="b" style="left:942.2px;top:17.2px;" width="8" height="8" viewBox="0 0 8 8"><path d="M.800 .800 7.200 7.200M7.200 .800 .800 7.200" stroke="#15191a" stroke-width="1.400"/></svg>
</div>
<footer class="b taskbar" style='left:0px;top:738px;width:960px;height:30px;background:linear-gradient(90deg,#5b594a 0%,#575748 30%,#4f5246 52%,#5a5145 70%,#5b5245 86%,#5d584a 100%);'>
<svg class="b" style="left:8.6px;top:4.4px;" width="21" height="20" viewBox="0 0 21 20"><path d="M0 3 8.800 1.700V9.500H0zM9.900 1.500 21 0V9.500H9.900zM0 10.600H8.800V18.400L0 17.100zM9.900 10.600H21V20L9.900 18.500z" fill="#fff"/></svg>
<div class="b tb-active" style='left:39.3px;top:0.6px;width:43px;height:29px;background:rgba(150,150,146,.62);border:.8px solid rgba(190,186,160,.55);box-sizing:border-box;'></div>
<svg class="b" style="left:49px;top:6px;" width="24" height="19" viewBox="0 0 24 19"><path d="M0 3h9l2 2h13v14H0z" fill="#F2CF6B"/><path d="M1.500 1h21v6h-21z" fill="#FBF3D0"/><circle cx="4" cy="1.800" r="1.100" fill="#2fae3f"/><circle cx="10" cy="2.800" r="1.100" fill="#d63a2f"/><circle cx="16" cy="4" r="1.100" fill="#3b8ad8"/><path d="M0 7h24v12H0z" fill="#F6DA83"/><path d="M3.400 11.500h17.200v7.500h-3.400v-4.500H6.800V19H3.400z" fill="#5CB1E4"/><path d="M3.400 11.500h17.200v2H3.400z" fill="#8fd0f2"/></svg>
<svg class="b" style="left:95px;top:3.4px;" width="24" height="24" viewBox="0 0 24 24"><defs><linearGradient id="eg1" x1="0" y1="0" x2="1" y2="1"><stop offset="0" stop-color="#35c1f1"/><stop offset="1" stop-color="#1b5fae"/></linearGradient><linearGradient id="eg2" x1="0" y1="0" x2="1" y2="0"><stop offset="0" stop-color="#2fb6e0"/><stop offset="1" stop-color="#5fd068"/></linearGradient></defs><circle cx="12" cy="12" r="11.600" fill="url(#eg1)"/><path d="M1 9.500A11.600 11.600 0 0 1 23.500 10.500C23.500 14 20.800 15.600 18.400 15.600 15.800 15.600 15.200 14.400 15.600 13.600 17.200 10.800 15 8 12 8 7 8 3 10 1 9.500z" fill="url(#eg2)"/><path d="M8.600 12.400C7.800 17 11 21.600 16.600 21.200 18.600 21 20 20.200 21 19.200 19 22.400 15 24 11.400 23.500 5.400 22.600 3.600 16 8.600 12.400z" fill="#1a4f9a"/></svg>
<svg class="b" style="left:142.5px;top:4.6px;" width="20" height="22" viewBox="0 0 20 22"><path d="M0 2h14l3 3v17H0z" fill="#f7f7f2" stroke="#6d7a52" stroke-width=".6"/><path d="M0 13h17v9H0z" fill="#7FC241"/><path d="M4 6v11M4 6h3v11M9.500 11.500h4M12 10l1.500 1.500L12 13" stroke="#1c1c1c" stroke-width="1.200" fill="none"/><path d="M17.800 .600 19.800 2 12.600 14.600 10.600 15.800 10.800 13.400z" fill="#E3A234" stroke="#7a5516" stroke-width=".5"/><path d="M17.800 .600 19.800 2 19 3.400 17 2z" fill="#d0342c"/></svg>
<svg class="b" style="left:187.6px;top:3.6px;" width="24" height="24" viewBox="0 0 24 24"><path d="M10.500 7.500C5 7.500 .500 11 .500 15.500s4 8 9.500 8c3 0 3.500-1.600 3-3-.6-1.800.6-3 2.600-3 3 0 5-1.600 5-4.400C20.600 9.600 16 7.500 10.500 7.500z" fill="#dfe6ee" stroke="#8e9aa8" stroke-width=".6"/><circle cx="5.200" cy="14" r="1.700" fill="#d8382f"/><circle cx="9.200" cy="11.200" r="1.700" fill="#37a84a"/><circle cx="13.800" cy="11.200" r="1.700" fill="#e7b52e"/><circle cx="6.600" cy="18.600" r="1.700" fill="#3a7bd5"/><path d="M21.600 .800 23.400 2 14.400 18.600 12.200 20.600 12.600 17.600z" fill="#E59B3A" stroke="#8a5a1c" stroke-width=".5"/><path d="M12.600 17.600 14.400 18.600 12.200 20.600z" fill="#3b3b3b"/></svg>
<div class="b" style='left:235.4px;top:4px;width:22.6px;height:22.6px;background:#0E8A16;'></div>
<svg class="b" style="left:239px;top:5.6px;" width="16" height="19" viewBox="0 0 16 19"><path d="M4.600 5V3.600a3 3 0 0 1 6 0V5" fill="none" stroke="#fff" stroke-width="1.100"/><path d="M.600 5.400H15L13.400 18H2.200z" fill="#fff"/><path d="M4 8.600 7.400 8.100V11.200H4zM8.100 8 12 7.400V11.200H8.100zM4 11.900H7.400V15L4 14.500zM8.100 11.900H12V15.700L8.100 15.100z" fill="#0E8A16"/></svg>
<svg class="b" style="left:280px;top:3px;" width="25" height="25" viewBox="0 0 25 25"><circle cx="12.5" cy="12.5" r="11.8" fill="#DB4437"/><path d="M12.5 12.5 L2.28 6.6 A11.8 11.8 0 0 0 12.5 24.3 z" fill="#0F9D58"/><path d="M12.5 12.5 L12.5 24.3 A11.8 11.8 0 0 0 22.72 6.6 z" fill="#FFCD40"/><circle cx="12.5" cy="12.5" r="5.55" fill="#fff"/><circle cx="12.5" cy="12.5" r="4.37" fill="#4285F4"/></svg>
<div class="b tb-active" style='left:318.2px;top:0.6px;width:43.6px;height:29px;background:rgba(170,172,166,.72);border:.8px solid rgba(205,205,195,.6);box-sizing:border-box;'></div>
<svg class="b" style="left:327.4px;top:3px;" width="25" height="25" viewBox="0 0 25 25"><circle cx="12.5" cy="12.5" r="11.8" fill="#DB4437"/><path d="M12.5 12.5 L2.28 6.6 A11.8 11.8 0 0 0 12.5 24.3 z" fill="#0F9D58"/><path d="M12.5 12.5 L12.5 24.3 A11.8 11.8 0 0 0 22.72 6.6 z" fill="#FFCD40"/><circle cx="12.5" cy="12.5" r="5.55" fill="#fff"/><circle cx="12.5" cy="12.5" r="4.37" fill="#4285F4"/><circle cx="18.500" cy="18.500" r="5.600" fill="#B80A5F"/></svg>
<span class="t" style='left:345.9px;transform:translateX(-50%);top:19.6px;font-size:6.8px;color:#fff;font-weight:bold;'>G</span>
<div class="b tb-active" style='left:364.2px;top:0.6px;width:43.6px;height:29px;background:rgba(128,134,120,.6);border:.8px solid rgba(170,172,150,.5);box-sizing:border-box;'></div>
<svg class="b" style="left:373.6px;top:5px;" width="24" height="22" viewBox="0 0 24 22"><rect x="4" y="0" width="20" height="15" rx="1" fill="#e9edf0" stroke="#9aa2a8" stroke-width=".6"/><rect x="5.600" y="1.600" width="16.800" height="11.800" fill="#fbfcfd"/><path d="M6 11 8.500 8 10 10 12 4 14 10.500 16 6 18 10 20 7 22 10.500" stroke="#3a8bd6" stroke-width="1" fill="none"/><path d="M11 15h6l1 4H10z" fill="#c5cbd0"/><rect x="7" y="19" width="14" height="2" rx="1" fill="#aab2b8"/><rect x="0" y="6" width="6" height="12" fill="#d8dde1" stroke="#8d969d" stroke-width=".5"/><circle cx="3" cy="9" r=".9" fill="#4cb052"/></svg>
<svg class="b" style="left:822.8px;top:13.4px;" width="6" height="4.2" viewBox="0 0 6 4.2"><path d="M0 4 3 .300 6 4z" fill="#fff"/></svg>
<svg class="b" style="left:838.4px;top:8.6px;" width="11.6" height="12.6" viewBox="0 0 11.6 12.6"><path d="M1 .500V12.500" stroke="#fff" stroke-width="1.300"/><path d="M2.400 1.200H7.400V5.600H2.400z" fill="#fff"/><path d="M8.200 2.400 11.400 4 8.200 5.600z" fill="#fff"/></svg>
<svg class="b" style="left:856.2px;top:8.6px;" width="12.6" height="12.6" viewBox="0 0 12.6 12.6"><rect x="3.400" y="1.800" width="8.600" height="6.400" fill="none" stroke="#fff" stroke-width="1"/><path d="M7.600 8.200v2.600M4.600 11.600h6" stroke="#fff" stroke-width="1"/><path d="M1.200 .500h2.400v4.600L1.200 7z" fill="none" stroke="#fff" stroke-width=".9"/></svg>
<span class="t" style='left:879px;top:11.2px;font-size:8.6px;color:#fff;'>ENG</span>
<span class="t" style='left:928px;transform:translateX(-50%);top:5.2px;font-size:8.9px;color:#fff;white-space:nowrap;'>12:36 PM</span>
<span class="t" style='left:928px;transform:translateX(-50%);top:18.4px;font-size:8.9px;color:#fff;white-space:nowrap;'>3/22/2023</span>
</footer>
</body></html>
